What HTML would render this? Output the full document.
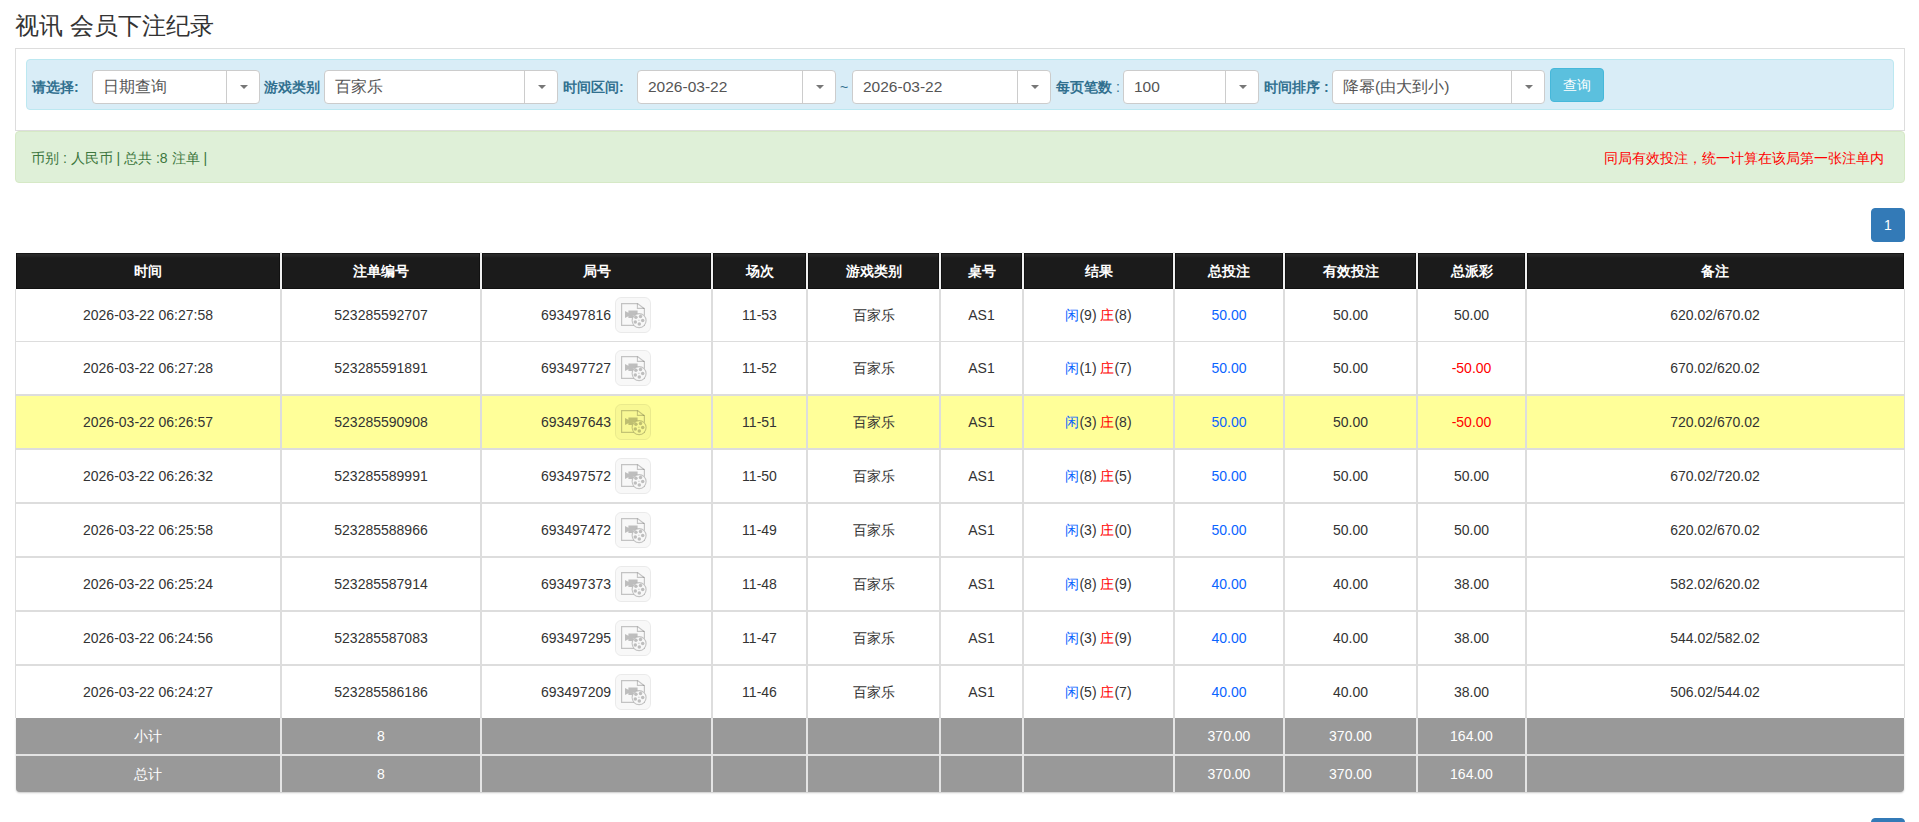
<!DOCTYPE html><html><head><meta charset="utf-8"><style>
*{box-sizing:border-box;margin:0;padding:0}
html,body{width:1919px;height:822px;overflow:hidden;background:#fff;font-family:"Liberation Sans",sans-serif;color:#333;font-size:14px}
.a{position:absolute}
.title{left:15px;top:8px;font-size:24px;color:#333;white-space:nowrap;line-height:36px}
.panel{left:15px;top:48px;width:1890px;height:83px;border:1px solid #ddd}
.info{left:26px;top:59px;width:1868px;height:51px;background:#d9edf7;border:1px solid #bce8f1;border-radius:4px}
.lbl{font-weight:bold;color:#31708f;font-size:14px;line-height:20px;top:77px;white-space:nowrap}
.sel{top:70px;height:34px;background:#fff;border:1px solid #ccc;border-radius:4px}
.sel .t{position:absolute;left:10px;top:0;line-height:32px;font-size:15.5px;color:#555;white-space:nowrap}
.sel .d{position:absolute;top:0;bottom:0;width:1px;background:#ccc}
.sel .c{position:absolute;top:14px;width:0;height:0;border-left:4px solid transparent;border-right:4px solid transparent;border-top:4px solid #777}
.btn{left:1550px;top:68px;width:54px;height:34px;background:#5bc0de;border:1px solid #46b8da;border-radius:4px;color:#fff;font-size:14px;line-height:32px;text-align:center}
.alert{left:15px;top:131px;width:1890px;height:52px;background:#dff0d8;border:1px solid #d6e9c6;border-radius:4px}
.at{top:149px;font-size:14px;line-height:18px;white-space:nowrap}
.pg{width:34px;height:34px;background:#337ab7;border:1px solid #337ab7;border-radius:4px;color:#fff;font-size:14px;text-align:center;line-height:32px}
.cell{position:absolute;text-align:center;white-space:nowrap;font-size:14px;color:#333}
.blue{color:#0a64ff}.red{color:#ff0000}
</style></head><body>

<div class="a title">视讯 会员下注纪录</div>
<div class="a panel"></div>
<div class="a info"></div>
<div class="a lbl" style="left:32px">请选择:</div>
<div class="a lbl" style="left:264px">游戏类别</div>
<div class="a lbl" style="left:563px">时间区间:</div>
<div class="a lbl" style="left:1056px">每页笔数 <span style="font-weight:normal">:</span></div>
<div class="a lbl" style="left:1264px">时间排序 :</div>
<div class="a sel" style="left:92px;width:168px"><span class="t">日期查询</span><span class="d" style="left:133px"></span><span class="c" style="left:146.5px"></span></div>
<div class="a sel" style="left:324px;width:234px"><span class="t">百家乐</span><span class="d" style="left:199px"></span><span class="c" style="left:212.5px"></span></div>
<div class="a sel" style="left:637px;width:199px"><span class="t">2026-03-22</span><span class="d" style="left:164px"></span><span class="c" style="left:177.5px"></span></div>
<div class="a sel" style="left:852px;width:199px"><span class="t">2026-03-22</span><span class="d" style="left:164px"></span><span class="c" style="left:177.5px"></span></div>
<div class="a sel" style="left:1123px;width:136px"><span class="t">100</span><span class="d" style="left:101px"></span><span class="c" style="left:114.5px"></span></div>
<div class="a sel" style="left:1332px;width:213px"><span class="t">降幂(由大到小)</span><span class="d" style="left:178px"></span><span class="c" style="left:191.5px"></span></div>
<div class="a" style="left:840px;top:77px;line-height:20px;color:#31708f;font-size:14px">~</div>
<div class="a btn">查询</div>
<div class="a alert"></div>
<div class="a at" style="left:31px;color:#3c763d">币别 : 人民币 | 总共 :8 注单 |</div>
<div class="a at" style="right:35px;color:#ff0000">同局有效投注，统一计算在该局第一张注单内</div>
<div class="a pg" style="left:1871px;top:208px">1</div>
<div class="a pg" style="left:1871px;top:818px">2</div>
<div class="a" style="left:15px;top:289px;width:1890px;height:429px;background:#ddd"></div>
<div class="a" style="left:16px;top:718px;width:1888px;height:74px;background:#999;border-radius:0 0 4px 4px;box-shadow:0 1px 2px rgba(0,0,0,.22)"></div>
<div class="a" style="left:16px;top:253px;width:1888px;height:36px;background:#1b1b1b"></div>
<div class="a" style="left:16px;top:253px;width:264px;height:36px;background:linear-gradient(#151515,#151515 1px,#2a2a2a 1px,#252525 3px,#1b1b1b 5px);border-left:1px solid #111;border-right:1px solid #111;border-bottom:1px solid #111"></div>
<div class="a" style="left:282px;top:253px;width:198px;height:36px;background:linear-gradient(#151515,#151515 1px,#2a2a2a 1px,#252525 3px,#1b1b1b 5px);border-left:1px solid #111;border-right:1px solid #111;border-bottom:1px solid #111"></div>
<div class="a" style="left:482px;top:253px;width:229px;height:36px;background:linear-gradient(#151515,#151515 1px,#2a2a2a 1px,#252525 3px,#1b1b1b 5px);border-left:1px solid #111;border-right:1px solid #111;border-bottom:1px solid #111"></div>
<div class="a" style="left:713px;top:253px;width:93px;height:36px;background:linear-gradient(#151515,#151515 1px,#2a2a2a 1px,#252525 3px,#1b1b1b 5px);border-left:1px solid #111;border-right:1px solid #111;border-bottom:1px solid #111"></div>
<div class="a" style="left:808px;top:253px;width:131px;height:36px;background:linear-gradient(#151515,#151515 1px,#2a2a2a 1px,#252525 3px,#1b1b1b 5px);border-left:1px solid #111;border-right:1px solid #111;border-bottom:1px solid #111"></div>
<div class="a" style="left:941px;top:253px;width:81px;height:36px;background:linear-gradient(#151515,#151515 1px,#2a2a2a 1px,#252525 3px,#1b1b1b 5px);border-left:1px solid #111;border-right:1px solid #111;border-bottom:1px solid #111"></div>
<div class="a" style="left:1024px;top:253px;width:149px;height:36px;background:linear-gradient(#151515,#151515 1px,#2a2a2a 1px,#252525 3px,#1b1b1b 5px);border-left:1px solid #111;border-right:1px solid #111;border-bottom:1px solid #111"></div>
<div class="a" style="left:1175px;top:253px;width:108px;height:36px;background:linear-gradient(#151515,#151515 1px,#2a2a2a 1px,#252525 3px,#1b1b1b 5px);border-left:1px solid #111;border-right:1px solid #111;border-bottom:1px solid #111"></div>
<div class="a" style="left:1285px;top:253px;width:131px;height:36px;background:linear-gradient(#151515,#151515 1px,#2a2a2a 1px,#252525 3px,#1b1b1b 5px);border-left:1px solid #111;border-right:1px solid #111;border-bottom:1px solid #111"></div>
<div class="a" style="left:1418px;top:253px;width:107px;height:36px;background:linear-gradient(#151515,#151515 1px,#2a2a2a 1px,#252525 3px,#1b1b1b 5px);border-left:1px solid #111;border-right:1px solid #111;border-bottom:1px solid #111"></div>
<div class="a" style="left:1527px;top:253px;width:377px;height:36px;background:linear-gradient(#151515,#151515 1px,#2a2a2a 1px,#252525 3px,#1b1b1b 5px);border-left:1px solid #111;border-right:1px solid #111;border-bottom:1px solid #111"></div>
<div class="a" style="left:280px;top:252px;width:2px;height:37px;background:#f0f0f0"></div>
<div class="a" style="left:480px;top:252px;width:2px;height:37px;background:#f0f0f0"></div>
<div class="a" style="left:711px;top:252px;width:2px;height:37px;background:#f0f0f0"></div>
<div class="a" style="left:806px;top:252px;width:2px;height:37px;background:#f0f0f0"></div>
<div class="a" style="left:939px;top:252px;width:2px;height:37px;background:#f0f0f0"></div>
<div class="a" style="left:1022px;top:252px;width:2px;height:37px;background:#f0f0f0"></div>
<div class="a" style="left:1173px;top:252px;width:2px;height:37px;background:#f0f0f0"></div>
<div class="a" style="left:1283px;top:252px;width:2px;height:37px;background:#f0f0f0"></div>
<div class="a" style="left:1416px;top:252px;width:2px;height:37px;background:#f0f0f0"></div>
<div class="a" style="left:1525px;top:252px;width:2px;height:37px;background:#f0f0f0"></div>
<div class="a" style="left:16px;top:289px;width:264px;height:52px;background:#fff"></div>
<div class="a" style="left:282px;top:289px;width:198px;height:52px;background:#fff"></div>
<div class="a" style="left:482px;top:289px;width:229px;height:52px;background:#fff"></div>
<div class="a" style="left:713px;top:289px;width:93px;height:52px;background:#fff"></div>
<div class="a" style="left:808px;top:289px;width:131px;height:52px;background:#fff"></div>
<div class="a" style="left:941px;top:289px;width:81px;height:52px;background:#fff"></div>
<div class="a" style="left:1024px;top:289px;width:149px;height:52px;background:#fff"></div>
<div class="a" style="left:1175px;top:289px;width:108px;height:52px;background:#fff"></div>
<div class="a" style="left:1285px;top:289px;width:131px;height:52px;background:#fff"></div>
<div class="a" style="left:1418px;top:289px;width:107px;height:52px;background:#fff"></div>
<div class="a" style="left:1527px;top:289px;width:377px;height:52px;background:#fff"></div>
<div class="a" style="left:16px;top:342px;width:264px;height:52px;background:#fff"></div>
<div class="a" style="left:282px;top:342px;width:198px;height:52px;background:#fff"></div>
<div class="a" style="left:482px;top:342px;width:229px;height:52px;background:#fff"></div>
<div class="a" style="left:713px;top:342px;width:93px;height:52px;background:#fff"></div>
<div class="a" style="left:808px;top:342px;width:131px;height:52px;background:#fff"></div>
<div class="a" style="left:941px;top:342px;width:81px;height:52px;background:#fff"></div>
<div class="a" style="left:1024px;top:342px;width:149px;height:52px;background:#fff"></div>
<div class="a" style="left:1175px;top:342px;width:108px;height:52px;background:#fff"></div>
<div class="a" style="left:1285px;top:342px;width:131px;height:52px;background:#fff"></div>
<div class="a" style="left:1418px;top:342px;width:107px;height:52px;background:#fff"></div>
<div class="a" style="left:1527px;top:342px;width:377px;height:52px;background:#fff"></div>
<div class="a" style="left:16px;top:396px;width:264px;height:52px;background:#ffff99"></div>
<div class="a" style="left:282px;top:396px;width:198px;height:52px;background:#ffff99"></div>
<div class="a" style="left:482px;top:396px;width:229px;height:52px;background:#ffff99"></div>
<div class="a" style="left:713px;top:396px;width:93px;height:52px;background:#ffff99"></div>
<div class="a" style="left:808px;top:396px;width:131px;height:52px;background:#ffff99"></div>
<div class="a" style="left:941px;top:396px;width:81px;height:52px;background:#ffff99"></div>
<div class="a" style="left:1024px;top:396px;width:149px;height:52px;background:#ffff99"></div>
<div class="a" style="left:1175px;top:396px;width:108px;height:52px;background:#ffff99"></div>
<div class="a" style="left:1285px;top:396px;width:131px;height:52px;background:#ffff99"></div>
<div class="a" style="left:1418px;top:396px;width:107px;height:52px;background:#ffff99"></div>
<div class="a" style="left:1527px;top:396px;width:377px;height:52px;background:#ffff99"></div>
<div class="a" style="left:16px;top:450px;width:264px;height:52px;background:#fff"></div>
<div class="a" style="left:282px;top:450px;width:198px;height:52px;background:#fff"></div>
<div class="a" style="left:482px;top:450px;width:229px;height:52px;background:#fff"></div>
<div class="a" style="left:713px;top:450px;width:93px;height:52px;background:#fff"></div>
<div class="a" style="left:808px;top:450px;width:131px;height:52px;background:#fff"></div>
<div class="a" style="left:941px;top:450px;width:81px;height:52px;background:#fff"></div>
<div class="a" style="left:1024px;top:450px;width:149px;height:52px;background:#fff"></div>
<div class="a" style="left:1175px;top:450px;width:108px;height:52px;background:#fff"></div>
<div class="a" style="left:1285px;top:450px;width:131px;height:52px;background:#fff"></div>
<div class="a" style="left:1418px;top:450px;width:107px;height:52px;background:#fff"></div>
<div class="a" style="left:1527px;top:450px;width:377px;height:52px;background:#fff"></div>
<div class="a" style="left:16px;top:504px;width:264px;height:52px;background:#fff"></div>
<div class="a" style="left:282px;top:504px;width:198px;height:52px;background:#fff"></div>
<div class="a" style="left:482px;top:504px;width:229px;height:52px;background:#fff"></div>
<div class="a" style="left:713px;top:504px;width:93px;height:52px;background:#fff"></div>
<div class="a" style="left:808px;top:504px;width:131px;height:52px;background:#fff"></div>
<div class="a" style="left:941px;top:504px;width:81px;height:52px;background:#fff"></div>
<div class="a" style="left:1024px;top:504px;width:149px;height:52px;background:#fff"></div>
<div class="a" style="left:1175px;top:504px;width:108px;height:52px;background:#fff"></div>
<div class="a" style="left:1285px;top:504px;width:131px;height:52px;background:#fff"></div>
<div class="a" style="left:1418px;top:504px;width:107px;height:52px;background:#fff"></div>
<div class="a" style="left:1527px;top:504px;width:377px;height:52px;background:#fff"></div>
<div class="a" style="left:16px;top:558px;width:264px;height:52px;background:#fff"></div>
<div class="a" style="left:282px;top:558px;width:198px;height:52px;background:#fff"></div>
<div class="a" style="left:482px;top:558px;width:229px;height:52px;background:#fff"></div>
<div class="a" style="left:713px;top:558px;width:93px;height:52px;background:#fff"></div>
<div class="a" style="left:808px;top:558px;width:131px;height:52px;background:#fff"></div>
<div class="a" style="left:941px;top:558px;width:81px;height:52px;background:#fff"></div>
<div class="a" style="left:1024px;top:558px;width:149px;height:52px;background:#fff"></div>
<div class="a" style="left:1175px;top:558px;width:108px;height:52px;background:#fff"></div>
<div class="a" style="left:1285px;top:558px;width:131px;height:52px;background:#fff"></div>
<div class="a" style="left:1418px;top:558px;width:107px;height:52px;background:#fff"></div>
<div class="a" style="left:1527px;top:558px;width:377px;height:52px;background:#fff"></div>
<div class="a" style="left:16px;top:612px;width:264px;height:52px;background:#fff"></div>
<div class="a" style="left:282px;top:612px;width:198px;height:52px;background:#fff"></div>
<div class="a" style="left:482px;top:612px;width:229px;height:52px;background:#fff"></div>
<div class="a" style="left:713px;top:612px;width:93px;height:52px;background:#fff"></div>
<div class="a" style="left:808px;top:612px;width:131px;height:52px;background:#fff"></div>
<div class="a" style="left:941px;top:612px;width:81px;height:52px;background:#fff"></div>
<div class="a" style="left:1024px;top:612px;width:149px;height:52px;background:#fff"></div>
<div class="a" style="left:1175px;top:612px;width:108px;height:52px;background:#fff"></div>
<div class="a" style="left:1285px;top:612px;width:131px;height:52px;background:#fff"></div>
<div class="a" style="left:1418px;top:612px;width:107px;height:52px;background:#fff"></div>
<div class="a" style="left:1527px;top:612px;width:377px;height:52px;background:#fff"></div>
<div class="a" style="left:16px;top:666px;width:264px;height:52px;background:#fff"></div>
<div class="a" style="left:282px;top:666px;width:198px;height:52px;background:#fff"></div>
<div class="a" style="left:482px;top:666px;width:229px;height:52px;background:#fff"></div>
<div class="a" style="left:713px;top:666px;width:93px;height:52px;background:#fff"></div>
<div class="a" style="left:808px;top:666px;width:131px;height:52px;background:#fff"></div>
<div class="a" style="left:941px;top:666px;width:81px;height:52px;background:#fff"></div>
<div class="a" style="left:1024px;top:666px;width:149px;height:52px;background:#fff"></div>
<div class="a" style="left:1175px;top:666px;width:108px;height:52px;background:#fff"></div>
<div class="a" style="left:1285px;top:666px;width:131px;height:52px;background:#fff"></div>
<div class="a" style="left:1418px;top:666px;width:107px;height:52px;background:#fff"></div>
<div class="a" style="left:1527px;top:666px;width:377px;height:52px;background:#fff"></div>
<div class="a" style="left:280px;top:718px;width:2px;height:36px;background:#e4e4e4"></div>
<div class="a" style="left:480px;top:718px;width:2px;height:36px;background:#e4e4e4"></div>
<div class="a" style="left:711px;top:718px;width:2px;height:36px;background:#e4e4e4"></div>
<div class="a" style="left:806px;top:718px;width:2px;height:36px;background:#e4e4e4"></div>
<div class="a" style="left:939px;top:718px;width:2px;height:36px;background:#e4e4e4"></div>
<div class="a" style="left:1022px;top:718px;width:2px;height:36px;background:#e4e4e4"></div>
<div class="a" style="left:1173px;top:718px;width:2px;height:36px;background:#e4e4e4"></div>
<div class="a" style="left:1283px;top:718px;width:2px;height:36px;background:#e4e4e4"></div>
<div class="a" style="left:1416px;top:718px;width:2px;height:36px;background:#e4e4e4"></div>
<div class="a" style="left:1525px;top:718px;width:2px;height:36px;background:#e4e4e4"></div>
<div class="a" style="left:280px;top:756px;width:2px;height:36px;background:#e4e4e4"></div>
<div class="a" style="left:480px;top:756px;width:2px;height:36px;background:#e4e4e4"></div>
<div class="a" style="left:711px;top:756px;width:2px;height:36px;background:#e4e4e4"></div>
<div class="a" style="left:806px;top:756px;width:2px;height:36px;background:#e4e4e4"></div>
<div class="a" style="left:939px;top:756px;width:2px;height:36px;background:#e4e4e4"></div>
<div class="a" style="left:1022px;top:756px;width:2px;height:36px;background:#e4e4e4"></div>
<div class="a" style="left:1173px;top:756px;width:2px;height:36px;background:#e4e4e4"></div>
<div class="a" style="left:1283px;top:756px;width:2px;height:36px;background:#e4e4e4"></div>
<div class="a" style="left:1416px;top:756px;width:2px;height:36px;background:#e4e4e4"></div>
<div class="a" style="left:1525px;top:756px;width:2px;height:36px;background:#e4e4e4"></div>
<div class="a" style="left:16px;top:754px;width:1888px;height:2px;background:#e4e4e4"></div>
<div class="cell" style="left:15px;width:266px;top:253px;height:36px;line-height:36px;color:#fff;font-weight:bold">时间</div>
<div class="cell" style="left:281px;width:200px;top:253px;height:36px;line-height:36px;color:#fff;font-weight:bold">注单编号</div>
<div class="cell" style="left:481px;width:231px;top:253px;height:36px;line-height:36px;color:#fff;font-weight:bold">局号</div>
<div class="cell" style="left:712px;width:95px;top:253px;height:36px;line-height:36px;color:#fff;font-weight:bold">场次</div>
<div class="cell" style="left:807px;width:133px;top:253px;height:36px;line-height:36px;color:#fff;font-weight:bold">游戏类别</div>
<div class="cell" style="left:940px;width:83px;top:253px;height:36px;line-height:36px;color:#fff;font-weight:bold">桌号</div>
<div class="cell" style="left:1023px;width:151px;top:253px;height:36px;line-height:36px;color:#fff;font-weight:bold">结果</div>
<div class="cell" style="left:1174px;width:110px;top:253px;height:36px;line-height:36px;color:#fff;font-weight:bold">总投注</div>
<div class="cell" style="left:1284px;width:133px;top:253px;height:36px;line-height:36px;color:#fff;font-weight:bold">有效投注</div>
<div class="cell" style="left:1417px;width:109px;top:253px;height:36px;line-height:36px;color:#fff;font-weight:bold">总派彩</div>
<div class="cell" style="left:1526px;width:378px;top:253px;height:36px;line-height:36px;color:#fff;font-weight:bold">备注</div>
<div class="cell" style="left:15px;width:266px;top:289px;height:52px;line-height:52px;">2026-03-22 06:27:58</div>
<div class="cell" style="left:281px;width:200px;top:289px;height:52px;line-height:52px;">523285592707</div>
<div class="cell" style="left:481px;width:130px;text-align:right;top:289px;height:52px;line-height:52px">693497816</div>
<div class="a" style="left:615px;top:297px;width:36px;height:36px"><svg width="36" height="36" viewBox="0 0 36 36" style="display:block"><defs><mask id="MK" maskUnits="userSpaceOnUse" x="0" y="0" width="36" height="36"><rect width="36" height="36" fill="#fff"/><circle cx="24.1" cy="23.6" r="7.4" fill="#000"/></mask></defs><rect x="0.5" y="0.5" width="35" height="35" rx="5.5" fill="rgba(0,0,0,.028)" stroke="rgba(0,0,0,.07)"/>
<g mask="url(#MK)"><path d="M6.6 6.6H22.6L29.4 11.8V28.4H6.6Z" fill="none" stroke="rgba(0,0,0,.21)" stroke-width="1.2"/><path d="M22.4 6.6V11.4H29.4" fill="none" stroke="rgba(0,0,0,.21)" stroke-width="1.1"/>
<path d="M10 14L13.4 15.8V13.6H22.6V20.9H13.4V19.2L10 20.9Z" fill="rgba(0,0,0,.23)"/></g>
<circle cx="24.1" cy="23.6" r="7" fill="none" stroke="rgba(0,0,0,.21)" stroke-width="1.1"/>
<g fill="rgba(0,0,0,.23)"><circle cx="20.9" cy="20.3" r="1.75"/><circle cx="25.5" cy="19.5" r="1.75"/><circle cx="27.7" cy="23.4" r="1.75"/><circle cx="20.3" cy="24.9" r="1.75"/><circle cx="24.3" cy="27.1" r="1.75"/><rect x="23.2" y="22.8" width="1.4" height="0.8"/></g>
</svg></div>
<div class="cell" style="left:712px;width:95px;top:289px;height:52px;line-height:52px;">11-53</div>
<div class="cell" style="left:807px;width:133px;top:289px;height:52px;line-height:52px;">百家乐</div>
<div class="cell" style="left:940px;width:83px;top:289px;height:52px;line-height:52px;">AS1</div>
<div class="cell" style="left:1023px;width:151px;top:289px;height:52px;line-height:52px;"><span class="blue">闲</span>(9) <span class="red">庄</span>(8)</div>
<div class="cell" style="left:1174px;width:110px;top:289px;height:52px;line-height:52px;color:#0a64ff">50.00</div>
<div class="cell" style="left:1284px;width:133px;top:289px;height:52px;line-height:52px;">50.00</div>
<div class="cell" style="left:1417px;width:109px;top:289px;height:52px;line-height:52px;">50.00</div>
<div class="cell" style="left:1526px;width:378px;top:289px;height:52px;line-height:52px;">620.02/670.02</div>
<div class="cell" style="left:15px;width:266px;top:342px;height:52px;line-height:52px;">2026-03-22 06:27:28</div>
<div class="cell" style="left:281px;width:200px;top:342px;height:52px;line-height:52px;">523285591891</div>
<div class="cell" style="left:481px;width:130px;text-align:right;top:342px;height:52px;line-height:52px">693497727</div>
<div class="a" style="left:615px;top:350px;width:36px;height:36px"><svg width="36" height="36" viewBox="0 0 36 36" style="display:block"><defs><mask id="MK" maskUnits="userSpaceOnUse" x="0" y="0" width="36" height="36"><rect width="36" height="36" fill="#fff"/><circle cx="24.1" cy="23.6" r="7.4" fill="#000"/></mask></defs><rect x="0.5" y="0.5" width="35" height="35" rx="5.5" fill="rgba(0,0,0,.028)" stroke="rgba(0,0,0,.07)"/>
<g mask="url(#MK)"><path d="M6.6 6.6H22.6L29.4 11.8V28.4H6.6Z" fill="none" stroke="rgba(0,0,0,.21)" stroke-width="1.2"/><path d="M22.4 6.6V11.4H29.4" fill="none" stroke="rgba(0,0,0,.21)" stroke-width="1.1"/>
<path d="M10 14L13.4 15.8V13.6H22.6V20.9H13.4V19.2L10 20.9Z" fill="rgba(0,0,0,.23)"/></g>
<circle cx="24.1" cy="23.6" r="7" fill="none" stroke="rgba(0,0,0,.21)" stroke-width="1.1"/>
<g fill="rgba(0,0,0,.23)"><circle cx="20.9" cy="20.3" r="1.75"/><circle cx="25.5" cy="19.5" r="1.75"/><circle cx="27.7" cy="23.4" r="1.75"/><circle cx="20.3" cy="24.9" r="1.75"/><circle cx="24.3" cy="27.1" r="1.75"/><rect x="23.2" y="22.8" width="1.4" height="0.8"/></g>
</svg></div>
<div class="cell" style="left:712px;width:95px;top:342px;height:52px;line-height:52px;">11-52</div>
<div class="cell" style="left:807px;width:133px;top:342px;height:52px;line-height:52px;">百家乐</div>
<div class="cell" style="left:940px;width:83px;top:342px;height:52px;line-height:52px;">AS1</div>
<div class="cell" style="left:1023px;width:151px;top:342px;height:52px;line-height:52px;"><span class="blue">闲</span>(1) <span class="red">庄</span>(7)</div>
<div class="cell" style="left:1174px;width:110px;top:342px;height:52px;line-height:52px;color:#0a64ff">50.00</div>
<div class="cell" style="left:1284px;width:133px;top:342px;height:52px;line-height:52px;">50.00</div>
<div class="cell" style="left:1417px;width:109px;top:342px;height:52px;line-height:52px;color:#ff0000">-50.00</div>
<div class="cell" style="left:1526px;width:378px;top:342px;height:52px;line-height:52px;">670.02/620.02</div>
<div class="cell" style="left:15px;width:266px;top:396px;height:52px;line-height:52px;">2026-03-22 06:26:57</div>
<div class="cell" style="left:281px;width:200px;top:396px;height:52px;line-height:52px;">523285590908</div>
<div class="cell" style="left:481px;width:130px;text-align:right;top:396px;height:52px;line-height:52px">693497643</div>
<div class="a" style="left:615px;top:404px;width:36px;height:36px"><svg width="36" height="36" viewBox="0 0 36 36" style="display:block"><defs><mask id="MK" maskUnits="userSpaceOnUse" x="0" y="0" width="36" height="36"><rect width="36" height="36" fill="#fff"/><circle cx="24.1" cy="23.6" r="7.4" fill="#000"/></mask></defs><rect x="0.5" y="0.5" width="35" height="35" rx="5.5" fill="rgba(0,0,0,.028)" stroke="rgba(0,0,0,.07)"/>
<g mask="url(#MK)"><path d="M6.6 6.6H22.6L29.4 11.8V28.4H6.6Z" fill="none" stroke="rgba(0,0,0,.21)" stroke-width="1.2"/><path d="M22.4 6.6V11.4H29.4" fill="none" stroke="rgba(0,0,0,.21)" stroke-width="1.1"/>
<path d="M10 14L13.4 15.8V13.6H22.6V20.9H13.4V19.2L10 20.9Z" fill="rgba(0,0,0,.23)"/></g>
<circle cx="24.1" cy="23.6" r="7" fill="none" stroke="rgba(0,0,0,.21)" stroke-width="1.1"/>
<g fill="rgba(0,0,0,.23)"><circle cx="20.9" cy="20.3" r="1.75"/><circle cx="25.5" cy="19.5" r="1.75"/><circle cx="27.7" cy="23.4" r="1.75"/><circle cx="20.3" cy="24.9" r="1.75"/><circle cx="24.3" cy="27.1" r="1.75"/><rect x="23.2" y="22.8" width="1.4" height="0.8"/></g>
</svg></div>
<div class="cell" style="left:712px;width:95px;top:396px;height:52px;line-height:52px;">11-51</div>
<div class="cell" style="left:807px;width:133px;top:396px;height:52px;line-height:52px;">百家乐</div>
<div class="cell" style="left:940px;width:83px;top:396px;height:52px;line-height:52px;">AS1</div>
<div class="cell" style="left:1023px;width:151px;top:396px;height:52px;line-height:52px;"><span class="blue">闲</span>(3) <span class="red">庄</span>(8)</div>
<div class="cell" style="left:1174px;width:110px;top:396px;height:52px;line-height:52px;color:#0a64ff">50.00</div>
<div class="cell" style="left:1284px;width:133px;top:396px;height:52px;line-height:52px;">50.00</div>
<div class="cell" style="left:1417px;width:109px;top:396px;height:52px;line-height:52px;color:#ff0000">-50.00</div>
<div class="cell" style="left:1526px;width:378px;top:396px;height:52px;line-height:52px;">720.02/670.02</div>
<div class="cell" style="left:15px;width:266px;top:450px;height:52px;line-height:52px;">2026-03-22 06:26:32</div>
<div class="cell" style="left:281px;width:200px;top:450px;height:52px;line-height:52px;">523285589991</div>
<div class="cell" style="left:481px;width:130px;text-align:right;top:450px;height:52px;line-height:52px">693497572</div>
<div class="a" style="left:615px;top:458px;width:36px;height:36px"><svg width="36" height="36" viewBox="0 0 36 36" style="display:block"><defs><mask id="MK" maskUnits="userSpaceOnUse" x="0" y="0" width="36" height="36"><rect width="36" height="36" fill="#fff"/><circle cx="24.1" cy="23.6" r="7.4" fill="#000"/></mask></defs><rect x="0.5" y="0.5" width="35" height="35" rx="5.5" fill="rgba(0,0,0,.028)" stroke="rgba(0,0,0,.07)"/>
<g mask="url(#MK)"><path d="M6.6 6.6H22.6L29.4 11.8V28.4H6.6Z" fill="none" stroke="rgba(0,0,0,.21)" stroke-width="1.2"/><path d="M22.4 6.6V11.4H29.4" fill="none" stroke="rgba(0,0,0,.21)" stroke-width="1.1"/>
<path d="M10 14L13.4 15.8V13.6H22.6V20.9H13.4V19.2L10 20.9Z" fill="rgba(0,0,0,.23)"/></g>
<circle cx="24.1" cy="23.6" r="7" fill="none" stroke="rgba(0,0,0,.21)" stroke-width="1.1"/>
<g fill="rgba(0,0,0,.23)"><circle cx="20.9" cy="20.3" r="1.75"/><circle cx="25.5" cy="19.5" r="1.75"/><circle cx="27.7" cy="23.4" r="1.75"/><circle cx="20.3" cy="24.9" r="1.75"/><circle cx="24.3" cy="27.1" r="1.75"/><rect x="23.2" y="22.8" width="1.4" height="0.8"/></g>
</svg></div>
<div class="cell" style="left:712px;width:95px;top:450px;height:52px;line-height:52px;">11-50</div>
<div class="cell" style="left:807px;width:133px;top:450px;height:52px;line-height:52px;">百家乐</div>
<div class="cell" style="left:940px;width:83px;top:450px;height:52px;line-height:52px;">AS1</div>
<div class="cell" style="left:1023px;width:151px;top:450px;height:52px;line-height:52px;"><span class="blue">闲</span>(8) <span class="red">庄</span>(5)</div>
<div class="cell" style="left:1174px;width:110px;top:450px;height:52px;line-height:52px;color:#0a64ff">50.00</div>
<div class="cell" style="left:1284px;width:133px;top:450px;height:52px;line-height:52px;">50.00</div>
<div class="cell" style="left:1417px;width:109px;top:450px;height:52px;line-height:52px;">50.00</div>
<div class="cell" style="left:1526px;width:378px;top:450px;height:52px;line-height:52px;">670.02/720.02</div>
<div class="cell" style="left:15px;width:266px;top:504px;height:52px;line-height:52px;">2026-03-22 06:25:58</div>
<div class="cell" style="left:281px;width:200px;top:504px;height:52px;line-height:52px;">523285588966</div>
<div class="cell" style="left:481px;width:130px;text-align:right;top:504px;height:52px;line-height:52px">693497472</div>
<div class="a" style="left:615px;top:512px;width:36px;height:36px"><svg width="36" height="36" viewBox="0 0 36 36" style="display:block"><defs><mask id="MK" maskUnits="userSpaceOnUse" x="0" y="0" width="36" height="36"><rect width="36" height="36" fill="#fff"/><circle cx="24.1" cy="23.6" r="7.4" fill="#000"/></mask></defs><rect x="0.5" y="0.5" width="35" height="35" rx="5.5" fill="rgba(0,0,0,.028)" stroke="rgba(0,0,0,.07)"/>
<g mask="url(#MK)"><path d="M6.6 6.6H22.6L29.4 11.8V28.4H6.6Z" fill="none" stroke="rgba(0,0,0,.21)" stroke-width="1.2"/><path d="M22.4 6.6V11.4H29.4" fill="none" stroke="rgba(0,0,0,.21)" stroke-width="1.1"/>
<path d="M10 14L13.4 15.8V13.6H22.6V20.9H13.4V19.2L10 20.9Z" fill="rgba(0,0,0,.23)"/></g>
<circle cx="24.1" cy="23.6" r="7" fill="none" stroke="rgba(0,0,0,.21)" stroke-width="1.1"/>
<g fill="rgba(0,0,0,.23)"><circle cx="20.9" cy="20.3" r="1.75"/><circle cx="25.5" cy="19.5" r="1.75"/><circle cx="27.7" cy="23.4" r="1.75"/><circle cx="20.3" cy="24.9" r="1.75"/><circle cx="24.3" cy="27.1" r="1.75"/><rect x="23.2" y="22.8" width="1.4" height="0.8"/></g>
</svg></div>
<div class="cell" style="left:712px;width:95px;top:504px;height:52px;line-height:52px;">11-49</div>
<div class="cell" style="left:807px;width:133px;top:504px;height:52px;line-height:52px;">百家乐</div>
<div class="cell" style="left:940px;width:83px;top:504px;height:52px;line-height:52px;">AS1</div>
<div class="cell" style="left:1023px;width:151px;top:504px;height:52px;line-height:52px;"><span class="blue">闲</span>(3) <span class="red">庄</span>(0)</div>
<div class="cell" style="left:1174px;width:110px;top:504px;height:52px;line-height:52px;color:#0a64ff">50.00</div>
<div class="cell" style="left:1284px;width:133px;top:504px;height:52px;line-height:52px;">50.00</div>
<div class="cell" style="left:1417px;width:109px;top:504px;height:52px;line-height:52px;">50.00</div>
<div class="cell" style="left:1526px;width:378px;top:504px;height:52px;line-height:52px;">620.02/670.02</div>
<div class="cell" style="left:15px;width:266px;top:558px;height:52px;line-height:52px;">2026-03-22 06:25:24</div>
<div class="cell" style="left:281px;width:200px;top:558px;height:52px;line-height:52px;">523285587914</div>
<div class="cell" style="left:481px;width:130px;text-align:right;top:558px;height:52px;line-height:52px">693497373</div>
<div class="a" style="left:615px;top:566px;width:36px;height:36px"><svg width="36" height="36" viewBox="0 0 36 36" style="display:block"><defs><mask id="MK" maskUnits="userSpaceOnUse" x="0" y="0" width="36" height="36"><rect width="36" height="36" fill="#fff"/><circle cx="24.1" cy="23.6" r="7.4" fill="#000"/></mask></defs><rect x="0.5" y="0.5" width="35" height="35" rx="5.5" fill="rgba(0,0,0,.028)" stroke="rgba(0,0,0,.07)"/>
<g mask="url(#MK)"><path d="M6.6 6.6H22.6L29.4 11.8V28.4H6.6Z" fill="none" stroke="rgba(0,0,0,.21)" stroke-width="1.2"/><path d="M22.4 6.6V11.4H29.4" fill="none" stroke="rgba(0,0,0,.21)" stroke-width="1.1"/>
<path d="M10 14L13.4 15.8V13.6H22.6V20.9H13.4V19.2L10 20.9Z" fill="rgba(0,0,0,.23)"/></g>
<circle cx="24.1" cy="23.6" r="7" fill="none" stroke="rgba(0,0,0,.21)" stroke-width="1.1"/>
<g fill="rgba(0,0,0,.23)"><circle cx="20.9" cy="20.3" r="1.75"/><circle cx="25.5" cy="19.5" r="1.75"/><circle cx="27.7" cy="23.4" r="1.75"/><circle cx="20.3" cy="24.9" r="1.75"/><circle cx="24.3" cy="27.1" r="1.75"/><rect x="23.2" y="22.8" width="1.4" height="0.8"/></g>
</svg></div>
<div class="cell" style="left:712px;width:95px;top:558px;height:52px;line-height:52px;">11-48</div>
<div class="cell" style="left:807px;width:133px;top:558px;height:52px;line-height:52px;">百家乐</div>
<div class="cell" style="left:940px;width:83px;top:558px;height:52px;line-height:52px;">AS1</div>
<div class="cell" style="left:1023px;width:151px;top:558px;height:52px;line-height:52px;"><span class="blue">闲</span>(8) <span class="red">庄</span>(9)</div>
<div class="cell" style="left:1174px;width:110px;top:558px;height:52px;line-height:52px;color:#0a64ff">40.00</div>
<div class="cell" style="left:1284px;width:133px;top:558px;height:52px;line-height:52px;">40.00</div>
<div class="cell" style="left:1417px;width:109px;top:558px;height:52px;line-height:52px;">38.00</div>
<div class="cell" style="left:1526px;width:378px;top:558px;height:52px;line-height:52px;">582.02/620.02</div>
<div class="cell" style="left:15px;width:266px;top:612px;height:52px;line-height:52px;">2026-03-22 06:24:56</div>
<div class="cell" style="left:281px;width:200px;top:612px;height:52px;line-height:52px;">523285587083</div>
<div class="cell" style="left:481px;width:130px;text-align:right;top:612px;height:52px;line-height:52px">693497295</div>
<div class="a" style="left:615px;top:620px;width:36px;height:36px"><svg width="36" height="36" viewBox="0 0 36 36" style="display:block"><defs><mask id="MK" maskUnits="userSpaceOnUse" x="0" y="0" width="36" height="36"><rect width="36" height="36" fill="#fff"/><circle cx="24.1" cy="23.6" r="7.4" fill="#000"/></mask></defs><rect x="0.5" y="0.5" width="35" height="35" rx="5.5" fill="rgba(0,0,0,.028)" stroke="rgba(0,0,0,.07)"/>
<g mask="url(#MK)"><path d="M6.6 6.6H22.6L29.4 11.8V28.4H6.6Z" fill="none" stroke="rgba(0,0,0,.21)" stroke-width="1.2"/><path d="M22.4 6.6V11.4H29.4" fill="none" stroke="rgba(0,0,0,.21)" stroke-width="1.1"/>
<path d="M10 14L13.4 15.8V13.6H22.6V20.9H13.4V19.2L10 20.9Z" fill="rgba(0,0,0,.23)"/></g>
<circle cx="24.1" cy="23.6" r="7" fill="none" stroke="rgba(0,0,0,.21)" stroke-width="1.1"/>
<g fill="rgba(0,0,0,.23)"><circle cx="20.9" cy="20.3" r="1.75"/><circle cx="25.5" cy="19.5" r="1.75"/><circle cx="27.7" cy="23.4" r="1.75"/><circle cx="20.3" cy="24.9" r="1.75"/><circle cx="24.3" cy="27.1" r="1.75"/><rect x="23.2" y="22.8" width="1.4" height="0.8"/></g>
</svg></div>
<div class="cell" style="left:712px;width:95px;top:612px;height:52px;line-height:52px;">11-47</div>
<div class="cell" style="left:807px;width:133px;top:612px;height:52px;line-height:52px;">百家乐</div>
<div class="cell" style="left:940px;width:83px;top:612px;height:52px;line-height:52px;">AS1</div>
<div class="cell" style="left:1023px;width:151px;top:612px;height:52px;line-height:52px;"><span class="blue">闲</span>(3) <span class="red">庄</span>(9)</div>
<div class="cell" style="left:1174px;width:110px;top:612px;height:52px;line-height:52px;color:#0a64ff">40.00</div>
<div class="cell" style="left:1284px;width:133px;top:612px;height:52px;line-height:52px;">40.00</div>
<div class="cell" style="left:1417px;width:109px;top:612px;height:52px;line-height:52px;">38.00</div>
<div class="cell" style="left:1526px;width:378px;top:612px;height:52px;line-height:52px;">544.02/582.02</div>
<div class="cell" style="left:15px;width:266px;top:666px;height:52px;line-height:52px;">2026-03-22 06:24:27</div>
<div class="cell" style="left:281px;width:200px;top:666px;height:52px;line-height:52px;">523285586186</div>
<div class="cell" style="left:481px;width:130px;text-align:right;top:666px;height:52px;line-height:52px">693497209</div>
<div class="a" style="left:615px;top:674px;width:36px;height:36px"><svg width="36" height="36" viewBox="0 0 36 36" style="display:block"><defs><mask id="MK" maskUnits="userSpaceOnUse" x="0" y="0" width="36" height="36"><rect width="36" height="36" fill="#fff"/><circle cx="24.1" cy="23.6" r="7.4" fill="#000"/></mask></defs><rect x="0.5" y="0.5" width="35" height="35" rx="5.5" fill="rgba(0,0,0,.028)" stroke="rgba(0,0,0,.07)"/>
<g mask="url(#MK)"><path d="M6.6 6.6H22.6L29.4 11.8V28.4H6.6Z" fill="none" stroke="rgba(0,0,0,.21)" stroke-width="1.2"/><path d="M22.4 6.6V11.4H29.4" fill="none" stroke="rgba(0,0,0,.21)" stroke-width="1.1"/>
<path d="M10 14L13.4 15.8V13.6H22.6V20.9H13.4V19.2L10 20.9Z" fill="rgba(0,0,0,.23)"/></g>
<circle cx="24.1" cy="23.6" r="7" fill="none" stroke="rgba(0,0,0,.21)" stroke-width="1.1"/>
<g fill="rgba(0,0,0,.23)"><circle cx="20.9" cy="20.3" r="1.75"/><circle cx="25.5" cy="19.5" r="1.75"/><circle cx="27.7" cy="23.4" r="1.75"/><circle cx="20.3" cy="24.9" r="1.75"/><circle cx="24.3" cy="27.1" r="1.75"/><rect x="23.2" y="22.8" width="1.4" height="0.8"/></g>
</svg></div>
<div class="cell" style="left:712px;width:95px;top:666px;height:52px;line-height:52px;">11-46</div>
<div class="cell" style="left:807px;width:133px;top:666px;height:52px;line-height:52px;">百家乐</div>
<div class="cell" style="left:940px;width:83px;top:666px;height:52px;line-height:52px;">AS1</div>
<div class="cell" style="left:1023px;width:151px;top:666px;height:52px;line-height:52px;"><span class="blue">闲</span>(5) <span class="red">庄</span>(7)</div>
<div class="cell" style="left:1174px;width:110px;top:666px;height:52px;line-height:52px;color:#0a64ff">40.00</div>
<div class="cell" style="left:1284px;width:133px;top:666px;height:52px;line-height:52px;">40.00</div>
<div class="cell" style="left:1417px;width:109px;top:666px;height:52px;line-height:52px;">38.00</div>
<div class="cell" style="left:1526px;width:378px;top:666px;height:52px;line-height:52px;">506.02/544.02</div>
<div class="cell" style="left:15px;width:266px;top:718px;height:36px;line-height:36px;color:#fff">小计</div>
<div class="cell" style="left:281px;width:200px;top:718px;height:36px;line-height:36px;color:#fff">8</div>
<div class="cell" style="left:1174px;width:110px;top:718px;height:36px;line-height:36px;color:#fff">370.00</div>
<div class="cell" style="left:1284px;width:133px;top:718px;height:36px;line-height:36px;color:#fff">370.00</div>
<div class="cell" style="left:1417px;width:109px;top:718px;height:36px;line-height:36px;color:#fff">164.00</div>
<div class="cell" style="left:15px;width:266px;top:756px;height:36px;line-height:36px;color:#fff">总计</div>
<div class="cell" style="left:281px;width:200px;top:756px;height:36px;line-height:36px;color:#fff">8</div>
<div class="cell" style="left:1174px;width:110px;top:756px;height:36px;line-height:36px;color:#fff">370.00</div>
<div class="cell" style="left:1284px;width:133px;top:756px;height:36px;line-height:36px;color:#fff">370.00</div>
<div class="cell" style="left:1417px;width:109px;top:756px;height:36px;line-height:36px;color:#fff">164.00</div>
</body></html>
